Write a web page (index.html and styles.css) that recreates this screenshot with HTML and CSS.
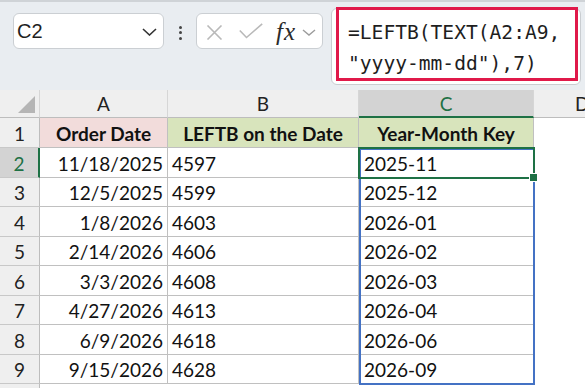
FILE: index.html
```html
<!DOCTYPE html>
<html>
<head>
<meta charset="utf-8">
<link rel="stylesheet" href="styles.css">
</head>
<body>
<div class="toolbar">
  <div class="namebox">
    <span class="ref">C2</span>
    <svg class="chev" width="15" height="8" viewBox="0 0 15 8"><path d="M1 1 L7.5 7 L14 1" fill="none" stroke="#333" stroke-width="1.6"/></svg>
  </div>
  <div class="dots"><i></i><i></i><i></i></div>
  <div class="fxbox">
    <svg class="xicon" width="17" height="15" viewBox="0 0 17 15"><path d="M1.5 0.5 L15.5 14.5 M15.5 0.5 L1.5 14.5" fill="none" stroke="#b9b9b9" stroke-width="1.6"/></svg>
    <svg class="check" width="24" height="16" viewBox="0 0 24 16"><path d="M0.8 7.5 L7.5 14.5 L23.2 0.8" fill="none" stroke="#b9b9b9" stroke-width="1.6"/></svg>
    <span class="fx">fx</span>
    <svg class="chev2" width="14" height="7" viewBox="0 0 14 7"><path d="M1 1 L7 6 L13 1" fill="none" stroke="#9c9c9c" stroke-width="1.4"/></svg>
  </div>
  <div class="formulabar">
    <div class="formula">=LEFTB(TEXT(A2:A9,<br>"yyyy-mm-dd"),7)</div>
  </div>
</div>
<div class="sheet">
  <div class="ch corner"><svg width="40" height="28" viewBox="0 0 40 28"><polygon points="35,6 35,23 18,23" fill="#b5b5b5"/></svg></div>
  <div class="ch">A</div>
  <div class="ch">B</div>
  <div class="ch sel">C</div>
  <div class="ch dcol">D</div>

  <div class="rh">1</div>
  <div class="c hd pink">Order Date</div>
  <div class="c hd green">LEFTB on the Date</div>
  <div class="c hd green">Year-Month Key</div>
  <div class="c d"></div>

  <div class="rh sel">2</div>
  <div class="c num">11/18/2025</div>
  <div class="c txt">4597</div>
  <div class="c key">2025-11</div>
  <div class="c d"></div>

  <div class="rh">3</div>
  <div class="c num">12/5/2025</div>
  <div class="c txt">4599</div>
  <div class="c key">2025-12</div>
  <div class="c d"></div>

  <div class="rh">4</div>
  <div class="c num">1/8/2026</div>
  <div class="c txt">4603</div>
  <div class="c key">2026-01</div>
  <div class="c d"></div>

  <div class="rh">5</div>
  <div class="c num">2/14/2026</div>
  <div class="c txt">4606</div>
  <div class="c key">2026-02</div>
  <div class="c d"></div>

  <div class="rh">6</div>
  <div class="c num">3/3/2026</div>
  <div class="c txt">4608</div>
  <div class="c key">2026-03</div>
  <div class="c d"></div>

  <div class="rh">7</div>
  <div class="c num">4/27/2026</div>
  <div class="c txt">4613</div>
  <div class="c key">2026-04</div>
  <div class="c d"></div>

  <div class="rh">8</div>
  <div class="c num">6/9/2026</div>
  <div class="c txt">4618</div>
  <div class="c key">2026-06</div>
  <div class="c d"></div>

  <div class="rh">9</div>
  <div class="c num">9/15/2026</div>
  <div class="c txt">4628</div>
  <div class="c key">2026-09</div>
  <div class="c d"></div>

  <div class="rh last"></div>
  <div class="c last"></div>
  <div class="c last"></div>
  <div class="c last"></div>
  <div class="c d last"></div>

  <div class="range"></div>
  <div class="active"></div>
  <div class="handle"></div>
</div>
</body>
</html>
```
FILE: styles.css
```css
html, body {
  margin: 0;
  padding: 0;
}
body {
  width: 585px;
  height: 388px;
  overflow: hidden;
  background: #ffffff;
  font-family: Lato, "Open Sans", sans-serif;
}

/* ---------- toolbar ---------- */
.toolbar {
  height: 90px;
  box-sizing: border-box;
  background: #e9edf1;
  border-top: 2px solid #cfd3d7;
  display: flex;
  align-items: flex-start;
}
.namebox {
  margin: 11px 0 0 13px;
  width: 151px;
  height: 36px;
  box-sizing: border-box;
  background: #fff;
  border: 1px solid #cbcfd3;
  border-radius: 6px;
  display: flex;
  align-items: center;
  justify-content: space-between;
  padding: 0 6px 0 3px;
  font-family: "Liberation Sans", Arial, sans-serif;
  font-size: 20px;
  color: #1f1f1f;
}
.chev {
  display: block;
  margin-top: 2px;
}
.dots {
  width: 32px;
  height: 36px;
  margin-top: 11px;
  padding-top: 3px;
  box-sizing: border-box;
  display: flex;
  flex-direction: column;
  align-items: center;
  justify-content: center;
  gap: 2.5px;
}
.dots i {
  display: block;
  width: 3px;
  height: 3px;
  border-radius: 50%;
  background: #444;
}
.fxbox {
  margin-top: 11px;
  width: 127px;
  height: 36px;
  box-sizing: border-box;
  border: 1px solid #cbcfd3;
  border-radius: 6px;
  background: #fff;
  display: flex;
  align-items: center;
}
.xicon {
  display: block;
  margin-left: 9px;
  margin-top: 2px;
}
.check {
  display: block;
  margin-left: 16px;
}
.fx {
  margin-left: 13px;
  font-family: "Liberation Serif", "Times New Roman", serif;
  font-style: italic;
  font-size: 25px;
  line-height: 25px;
  color: #2b2b2b;
  letter-spacing: 1px;
}
.chev2 {
  display: block;
  margin-left: 6px;
  margin-top: 2px;
}
.formulabar {
  position: relative;
  margin: 6px 0 0 8px;
  width: 250px;
  height: 77px;
  box-sizing: border-box;
  background: #fff;
  border: 1px solid #c9cdd1;
  border-radius: 6px;
}
.formula {
  position: absolute;
  left: 4px;
  top: -2px;
  width: 242px;
  height: 74px;
  box-sizing: border-box;
  border: 3px solid #e0194a;
  background: #fff;
  padding: 7px 0 0 9px;
  font-family: "DejaVu Sans Mono", "Liberation Mono", monospace;
  font-size: 19.6px;
  line-height: 31px;
  color: #1e1e1e;
  white-space: nowrap;
}

/* ---------- sheet ---------- */
.sheet {
  position: relative;
  display: grid;
  grid-template-columns: 40px 128px 191px 175px 51px;
  grid-template-rows: 28px 30px 30px 29px 30px 29px 30px 29px 30px 29px 4px;
  font-size: 19px;
  color: #111;
}
.sheet > div {
  box-sizing: border-box;
  white-space: nowrap;
  overflow: hidden;
}
.ch {
  background: #efefef;
  border-right: 1px solid #d6d6d6;
  border-bottom: 1px solid #bdbdbd;
  display: flex;
  align-items: center;
  justify-content: center;
  font-size: 19px;
  color: #222;
}
.ch.corner {
  display: block;
}
.ch.corner svg {
  display: block;
}
.ch.sel {
  background: #d3d3d3;
  color: #1e7145;
  border-bottom: 2px solid #1e7145;
}
.ch.dcol {
  border-right: none;
  justify-content: flex-start;
  padding-left: 41px;
}
.rh {
  background: #efefef;
  border-right: 1px solid #bdbdbd;
  border-bottom: 1px solid #c8c8c8;
  display: flex;
  align-items: flex-end;
  justify-content: center;
  line-height: 22px;
  padding-bottom: 2px;
  color: #222;
}
.rh.sel {
  background: #d3d3d3;
  color: #1e7145;
  border-right: 2px solid #1e7145;
}
.c {
  border-right: 1px solid #c0c0c0;
  border-bottom: 1px solid #c0c0c0;
  display: flex;
  align-items: flex-end;
  line-height: 22px;
  padding-bottom: 2px;
}
.c.d {
  border: none;
}
.last {
  border-bottom: none !important;
}
.c.last {
  border-right: none;
}
.hd {
  font-weight: 700;
  justify-content: center;
}
.pink {
  background: #f2dcdb;
}
.green {
  background: #d8e4bc;
}
.num {
  justify-content: flex-end;
  padding-right: 4px;
}
.txt {
  padding-left: 4px;
}
.key {
  padding-left: 5px;
}

/* selection overlays */
.range {
  position: absolute;
  left: 359px;
  top: 58px;
  width: 176px;
  height: 237px;
  box-sizing: border-box;
  border: 2px solid #4472c4;
}
.active {
  position: absolute;
  left: 358px;
  top: 57px;
  width: 177px;
  height: 32px;
  box-sizing: border-box;
  border: 2px solid #1e7145;
}
.handle {
  position: absolute;
  left: 529px;
  top: 83px;
  width: 9px;
  height: 9px;
  box-sizing: border-box;
  background: #1e7145;
  border: 1px solid #fff;
}
```
